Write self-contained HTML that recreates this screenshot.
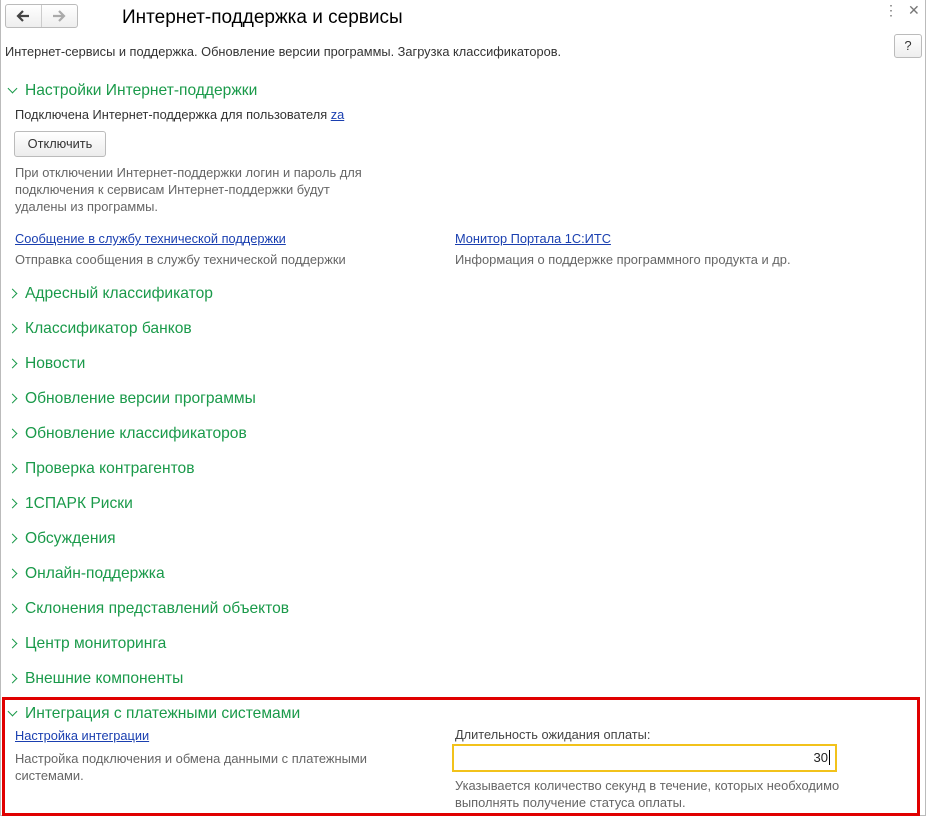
<!DOCTYPE html>
<html><head><meta charset="utf-8"><style>
*{margin:0;padding:0;box-sizing:border-box}
body{width:926px;height:816px;background:#fff;font-family:"Liberation Sans",sans-serif;position:relative;overflow:hidden;color:#333}
.a{position:absolute;white-space:nowrap}
.s{font-size:12.8px}
.g{color:#666;font-size:12.9px;line-height:17px}
.h{font-size:15.6px;color:#1a9a4a;left:25px}
.chev{position:absolute;left:9px;width:7px;height:7px;border-right:1.5px solid #1a9a4a;border-bottom:1.5px solid #1a9a4a}
.r{transform:rotate(-45deg)}
.d{transform:rotate(45deg)}
a{color:#1a3fb0;text-decoration:underline}
</style></head><body>
<div style="position:absolute;left:0;top:0;width:926px;height:816px;border:1px solid #bbb;border-top:none"></div>
<div class="a" style="left:5px;top:4px;width:73px;height:24px;border:1px solid #bbb;border-radius:3px;background:linear-gradient(#fff,#eee)"></div>
<div class="a" style="left:41px;top:5px;width:1px;height:22px;background:#ccc"></div>
<svg class="a" style="left:15px;top:9px" width="16" height="14" viewBox="0 0 16 14"><path d="M14 7H3M8 2L3 7l5 5" fill="none" stroke="#444" stroke-width="2.2"/></svg>
<svg class="a" style="left:51px;top:9px" width="16" height="14" viewBox="0 0 16 14"><path d="M2 7h11M8 2l5 5-5 5" fill="none" stroke="#aaa" stroke-width="2.2"/></svg>
<div class="a" style="left:122px;top:7px;font-size:19px;color:#000">Интернет-поддержка и сервисы</div>
<div class="a" style="left:884px;top:2px;font-size:14px;color:#777">&#8942;</div>
<div class="a" style="left:908px;top:2px;font-size:14px;color:#777">✕</div>
<div class="a" style="left:894px;top:34px;width:28px;height:24px;border:1px solid #bbb;border-radius:3px;background:linear-gradient(#fff,#eee);font-size:13px;text-align:center;line-height:22px;color:#333">?</div>
<div class="a s" style="left:5px;top:44px">Интернет-сервисы и поддержка. Обновление версии программы. Загрузка классификаторов.</div>
<div class="chev d" style="top:85px"></div>
<div class="a h" style="top:82px">Настройки Интернет-поддержки</div>
<div class="a s" style="left:15px;top:107px">Подключена Интернет-поддержка для пользователя <a>za</a></div>
<div class="a" style="left:14px;top:131px;width:92px;height:26px;border:1px solid #bbb;border-radius:3px;background:linear-gradient(#fff,#ececec);font-size:12.8px;text-align:center;line-height:24px;color:#333">Отключить</div>
<div class="a g" style="left:15px;top:164px">При отключении Интернет-поддержки логин и пароль для<br>подключения к сервисам Интернет-поддержки будут<br>удалены из программы.</div>
<div class="a s" style="left:15px;top:231px"><a>Сообщение в службу технической поддержки</a></div>
<div class="a g" style="left:15px;top:251px">Отправка сообщения в службу технической поддержки</div>
<div class="a s" style="left:455px;top:231px"><a>Монитор Портала 1С:ИТС</a></div>
<div class="a g" style="left:455px;top:251px">Информация о поддержке программного продукта и др.</div>

<div class="chev r" style="top:290px"></div><div class="a h" style="top:285px">Адресный классификатор</div>
<div class="chev r" style="top:325px"></div><div class="a h" style="top:320px">Классификатор банков</div>
<div class="chev r" style="top:360px"></div><div class="a h" style="top:355px">Новости</div>
<div class="chev r" style="top:395px"></div><div class="a h" style="top:390px">Обновление версии программы</div>
<div class="chev r" style="top:430px"></div><div class="a h" style="top:425px">Обновление классификаторов</div>
<div class="chev r" style="top:465px"></div><div class="a h" style="top:460px">Проверка контрагентов</div>
<div class="chev r" style="top:500px"></div><div class="a h" style="top:495px">1СПАРК Риски</div>
<div class="chev r" style="top:535px"></div><div class="a h" style="top:530px">Обсуждения</div>
<div class="chev r" style="top:570px"></div><div class="a h" style="top:565px">Онлайн-поддержка</div>
<div class="chev r" style="top:605px"></div><div class="a h" style="top:600px">Склонения представлений объектов</div>
<div class="chev r" style="top:640px"></div><div class="a h" style="top:635px">Центр мониторинга</div>
<div class="chev r" style="top:675px"></div><div class="a h" style="top:670px">Внешние компоненты</div>

<div class="a" style="left:2px;top:697px;width:918px;height:119px;border:3px solid #e00000"></div>
<div class="chev d" style="top:708px"></div><div class="a h" style="top:705px">Интеграция с платежными системами</div>
<div class="a s" style="left:15px;top:728px"><a>Настройка интеграции</a></div>
<div class="a g" style="left:15px;top:750px">Настройка подключения и обмена данными с платежными<br>системами.</div>
<div class="a" style="left:455px;top:727px;font-size:12.8px;color:#444">Длительность ожидания оплаты:</div>
<div class="a" style="left:452px;top:744px;width:385px;height:28px;border:2px solid #f2c21b;font-size:13px;text-align:right;padding-right:5px;line-height:24px;color:#222">30<span style="border-left:1px solid #000;margin-left:1px"></span></div>
<div class="a g" style="left:455px;top:777px">Указывается количество секунд в течение, которых необходимо<br>выполнять получение статуса оплаты.</div>
</body></html>
